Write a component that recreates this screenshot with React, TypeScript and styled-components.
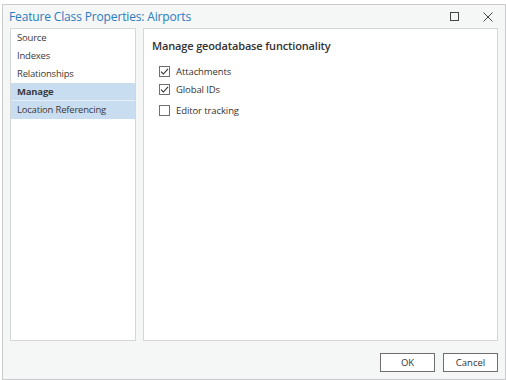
import React, { useState } from 'react';
import styled, { createGlobalStyle } from 'styled-components';

const GlobalStyle = createGlobalStyle`
  html, body {
    margin: 0;
    padding: 0;
    background: #ffffff;
  }
  body {
    font-family: 'Open Sans', 'Noto Sans', sans-serif;
  }
`;

const Dialog = styled.div`
  box-sizing: border-box;
  width: 504px;
  height: 376px;
  margin: 4px 0 0 2px;
  border: 1px solid #c9cbcc;
  background: #f5f6f6;
  display: flex;
  flex-direction: column;
`;

const TitleBar = styled.div`
  height: 23px;
  display: flex;
  align-items: center;
  padding: 0 0 0 6px;
`;

const Title = styled.div`
  flex: 1;
  font-size: 12px;
  color: #2a7bc0;
  letter-spacing: -0.15px;
`;

const WinButton = styled.div`
  width: 34px;
  height: 23px;
  display: flex;
  align-items: center;
  justify-content: center;
`;

const Body = styled.div`
  height: 313px;
  display: flex;
  gap: 7px;
  padding: 0 7px;
`;

const NavList = styled.div`
  box-sizing: border-box;
  width: 126px;
  border: 1px solid #d4d6d8;
  background: #ffffff;
`;

const NavItem = styled.div<{ $selected?: boolean; $hover?: boolean }>`
  height: 18px;
  line-height: 18px;
  padding-left: 6px;
  font-size: 9.5px;
  letter-spacing: -0.2px;
  color: #3a3a3a;
  font-weight: ${p => (p.$selected ? 700 : 400)};
  background: ${p => (p.$selected || p.$hover ? '#c9ddf0' : 'transparent')};
  border-bottom: 1px solid ${p => (p.$selected ? '#e6eef6' : 'transparent')};
  box-sizing: border-box;
`;

const Content = styled.div`
  box-sizing: border-box;
  flex: 1;
  border: 1px solid #d4d6d8;
  background: #ffffff;
  padding: 9px 8px;
`;

const Heading = styled.div`
  font-size: 11px;
  font-weight: 600;
  letter-spacing: -0.15px;
  color: #333333;
  margin-bottom: 9px;
`;

const CheckRow = styled.label<{ $gap: number }>`
  display: flex;
  align-items: center;
  gap: 6px;
  height: 18px;
  margin-left: 7px;
  margin-top: ${p => p.$gap}px;
  font-size: 9.5px;
  letter-spacing: -0.1px;
  color: #333333;
  cursor: pointer;
`;

const Box = styled.span`
  box-sizing: border-box;
  width: 11px;
  height: 11px;
  border: 1px solid #6f6f6f;
  background: #ffffff;
  display: flex;
  align-items: center;
  justify-content: center;
`;

const Footer = styled.div`
  display: flex;
  justify-content: flex-end;
  gap: 8px;
  padding: 12px 7px 0 0;
`;

const Button = styled.button`
  box-sizing: border-box;
  width: 55px;
  height: 19px;
  border: 1px solid #6e6e6e;
  background: #ffffff;
  font-family: 'Open Sans', 'Noto Sans', sans-serif;
  font-size: 9.5px;
  color: #333333;
  padding: 0;
`;

const NAV = ['Source', 'Indexes', 'Relationships', 'Manage', 'Location Referencing'];

const OPTIONS = [
  { label: 'Attachments', checked: true, gap: 0 },
  { label: 'Global IDs', checked: true, gap: 0 },
  { label: 'Editor tracking', checked: false, gap: 3 },
];

function Check({ on }: { on: boolean }) {
  return (
    <Box>
      {on && (
        <svg width="9" height="9" viewBox="0 0 9 9">
          <path d="M1 4.6 L3.4 7 L8 1.8" fill="none" stroke="#333" strokeWidth="1.1" />
        </svg>
      )}
    </Box>
  );
}

export default function App() {
  const [opts, setOpts] = useState(OPTIONS.map(o => o.checked));

  return (
    <>
      <GlobalStyle />
      <Dialog>
        <TitleBar>
          <Title>Feature Class Properties: Airports</Title>
          <WinButton>
            <svg width="9" height="9" viewBox="0 0 9 9">
              <rect x="0.5" y="0.5" width="8" height="8" fill="none" stroke="#444" strokeWidth="1" />
            </svg>
          </WinButton>
          <WinButton>
            <svg width="10" height="10" viewBox="0 0 10 10">
              <path d="M0.5 0.5 L9.5 9.5 M9.5 0.5 L0.5 9.5" stroke="#444" strokeWidth="1" />
            </svg>
          </WinButton>
        </TitleBar>
        <Body>
          <NavList>
            {NAV.map((n, i) => (
              <NavItem key={n} $selected={i === 3} $hover={i === 4}>
                {n}
              </NavItem>
            ))}
          </NavList>
          <Content>
            <Heading>Manage geodatabase functionality</Heading>
            {OPTIONS.map((o, i) => (
              <CheckRow
                key={o.label}
                $gap={o.gap}
                onClick={() => setOpts(opts.map((v, j) => (j === i ? !v : v)))}
              >
                <Check on={opts[i]} />
                {o.label}
              </CheckRow>
            ))}
          </Content>
        </Body>
        <Footer>
          <Button>OK</Button>
          <Button>Cancel</Button>
        </Footer>
      </Dialog>
    </>
  );
}
